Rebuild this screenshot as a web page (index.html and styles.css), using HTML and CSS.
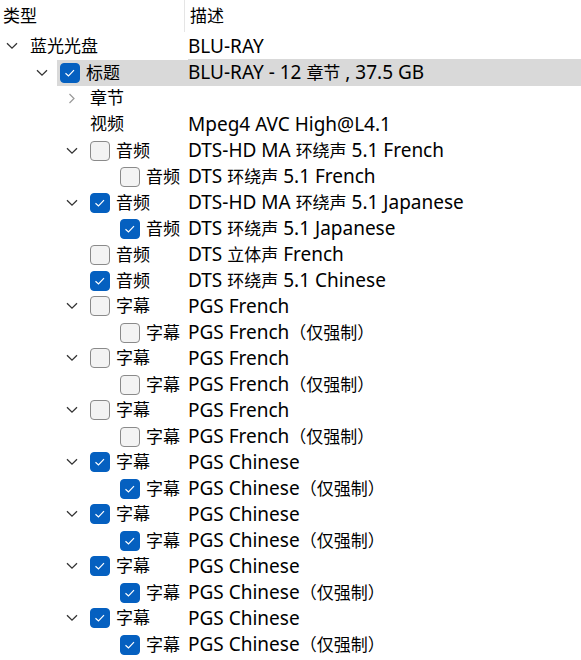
FILE: index.html
```html
<!DOCTYPE html>
<html lang="zh-CN">
<head>
    <meta charset="UTF-8">
    <title>蓝光光盘</title>
    <link rel="stylesheet" href="styles.css">
</head>
<body>
    <div class="tree">
        <div class="header">
            <div class="col-name">类型</div>
            <div class="col-desc">描述</div>
        </div>

        <div class="row lv0">
            <div class="name"><span class="twisty open"></span><span class="item"><span class="label">蓝光光盘</span></span></div>
            <div class="desc">BLU-RAY</div>
        </div>
        <div class="row lv1 selected">
            <div class="name"><span class="twisty open"></span><span class="item"><span class="box on"></span><span class="label">标题</span></span></div>
            <div class="desc">BLU-RAY - 12 <span class="zh">章节</span> , 37.5 GB</div>
        </div>
        <div class="row lv2">
            <div class="name"><span class="twisty closed"></span><span class="item"><span class="label">章节</span></span></div>
            <div class="desc"></div>
        </div>
        <div class="row lv2">
            <div class="name"><span class="twisty"></span><span class="item"><span class="label">视频</span></span></div>
            <div class="desc">Mpeg4 AVC High@L4.1</div>
        </div>
        <div class="row lv2">
            <div class="name"><span class="twisty open"></span><span class="item"><span class="box"></span><span class="label">音频</span></span></div>
            <div class="desc">DTS-HD MA <span class="zh">环绕声</span> 5.1 French</div>
        </div>
        <div class="row lv3">
            <div class="name"><span class="twisty"></span><span class="item"><span class="box"></span><span class="label">音频</span></span></div>
            <div class="desc">DTS <span class="zh">环绕声</span> 5.1 French</div>
        </div>
        <div class="row lv2">
            <div class="name"><span class="twisty open"></span><span class="item"><span class="box on"></span><span class="label">音频</span></span></div>
            <div class="desc">DTS-HD MA <span class="zh">环绕声</span> 5.1 Japanese</div>
        </div>
        <div class="row lv3">
            <div class="name"><span class="twisty"></span><span class="item"><span class="box on"></span><span class="label">音频</span></span></div>
            <div class="desc">DTS <span class="zh">环绕声</span> 5.1 Japanese</div>
        </div>
        <div class="row lv2">
            <div class="name"><span class="twisty"></span><span class="item"><span class="box"></span><span class="label">音频</span></span></div>
            <div class="desc">DTS <span class="zh">立体声</span> French</div>
        </div>
        <div class="row lv2">
            <div class="name"><span class="twisty"></span><span class="item"><span class="box on"></span><span class="label">音频</span></span></div>
            <div class="desc">DTS <span class="zh">环绕声</span> 5.1 Chinese</div>
        </div>

        <div class="row lv2">
            <div class="name"><span class="twisty open"></span><span class="item"><span class="box"></span><span class="label">字幕</span></span></div>
            <div class="desc">PGS French</div>
        </div>
        <div class="row lv3">
            <div class="name"><span class="twisty"></span><span class="item"><span class="box"></span><span class="label">字幕</span></span></div>
            <div class="desc">PGS French<span class="zh">（仅强制）</span></div>
        </div>
        <div class="row lv2">
            <div class="name"><span class="twisty open"></span><span class="item"><span class="box"></span><span class="label">字幕</span></span></div>
            <div class="desc">PGS French</div>
        </div>
        <div class="row lv3">
            <div class="name"><span class="twisty"></span><span class="item"><span class="box"></span><span class="label">字幕</span></span></div>
            <div class="desc">PGS French<span class="zh">（仅强制）</span></div>
        </div>
        <div class="row lv2">
            <div class="name"><span class="twisty open"></span><span class="item"><span class="box"></span><span class="label">字幕</span></span></div>
            <div class="desc">PGS French</div>
        </div>
        <div class="row lv3">
            <div class="name"><span class="twisty"></span><span class="item"><span class="box"></span><span class="label">字幕</span></span></div>
            <div class="desc">PGS French<span class="zh">（仅强制）</span></div>
        </div>
        <div class="row lv2">
            <div class="name"><span class="twisty open"></span><span class="item"><span class="box on"></span><span class="label">字幕</span></span></div>
            <div class="desc">PGS Chinese</div>
        </div>
        <div class="row lv3">
            <div class="name"><span class="twisty"></span><span class="item"><span class="box on"></span><span class="label">字幕</span></span></div>
            <div class="desc">PGS Chinese<span class="zh">（仅强制）</span></div>
        </div>
        <div class="row lv2">
            <div class="name"><span class="twisty open"></span><span class="item"><span class="box on"></span><span class="label">字幕</span></span></div>
            <div class="desc">PGS Chinese</div>
        </div>
        <div class="row lv3">
            <div class="name"><span class="twisty"></span><span class="item"><span class="box on"></span><span class="label">字幕</span></span></div>
            <div class="desc">PGS Chinese<span class="zh">（仅强制）</span></div>
        </div>
        <div class="row lv2">
            <div class="name"><span class="twisty open"></span><span class="item"><span class="box on"></span><span class="label">字幕</span></span></div>
            <div class="desc">PGS Chinese</div>
        </div>
        <div class="row lv3">
            <div class="name"><span class="twisty"></span><span class="item"><span class="box on"></span><span class="label">字幕</span></span></div>
            <div class="desc">PGS Chinese<span class="zh">（仅强制）</span></div>
        </div>
        <div class="row lv2">
            <div class="name"><span class="twisty open"></span><span class="item"><span class="box on"></span><span class="label">字幕</span></span></div>
            <div class="desc">PGS Chinese</div>
        </div>
        <div class="row lv3">
            <div class="name"><span class="twisty"></span><span class="item"><span class="box on"></span><span class="label">字幕</span></span></div>
            <div class="desc">PGS Chinese<span class="zh">（仅强制）</span></div>
        </div>
    </div>
</body>
</html>
```

FILE: styles.css
```css
body {
    margin: 0;
    background-color: #fff;
    color: #000;
    font-family: "Noto Sans", "Noto Sans CJK SC", sans-serif;
    font-size: 17px;
}
.tree {
    width: 581px;
}
.header {
    display: grid;
    grid-template-columns: 184px 1fr;
    height: 33px;
}
.header .col-name {
    padding-left: 3px;
    line-height: 32px;
}
.header .col-desc {
    border-left: 1px solid #e5e5e5;
    height: 32px;
    padding-left: 5px;
    line-height: 32px;
}
.row {
    display: grid;
    grid-template-columns: 188px 1fr;
    height: 26px;
    line-height: 26px;
}
.name {
    display: flex;
    align-items: center;
    white-space: nowrap;
    padding-left: 1px;
}
.lv1 .name { padding-left: 31px; }
.lv2 .name { padding-left: 61px; }
.lv3 .name { padding-left: 91px; }
.twisty {
    flex: none;
    width: 22px;
    height: 26px;
    background-repeat: no-repeat;
    background-position: center;
}
.twisty.open {
    background-image: url("data:image/svg+xml,%3Csvg xmlns='http://www.w3.org/2000/svg' width='12' height='8' viewBox='0 0 12 8'%3E%3Cpath d='M1 1.2 6 6.2 11 1.2' fill='none' stroke='%23333' stroke-width='1.3'/%3E%3C/svg%3E");
}
.twisty.closed {
    background-image: url("data:image/svg+xml,%3Csvg xmlns='http://www.w3.org/2000/svg' width='8' height='11' viewBox='0 0 8 11'%3E%3Cpath d='M1.5 1 6 5.5 1.5 10' fill='none' stroke='%23999' stroke-width='1.2'/%3E%3C/svg%3E");
}
.item {
    flex: 1;
    display: flex;
    align-items: center;
    height: 26px;
    margin-left: 4px;
    padding-left: 3px;
}
.box {
    flex: none;
    box-sizing: border-box;
    width: 20px;
    height: 20px;
    margin-right: 6px;
    border: 1px solid #8a8a8a;
    border-radius: 4px;
    background-color: #f3f3f3;
}
.box.on {
    border-color: #0560c0;
    background-color: #0560c0;
    background-image: url("data:image/svg+xml,%3Csvg xmlns='http://www.w3.org/2000/svg' width='18' height='18' viewBox='0 0 18 18'%3E%3Cpath d='M4.5 9.2 7.5 12 13 6.2' fill='none' stroke='%23fff' stroke-width='1.2'/%3E%3C/svg%3E");
    background-position: center;
    background-repeat: no-repeat;
}
.desc {
    white-space: nowrap;
    font-size: 19px;
}
.desc .zh {
    font-size: 17px;
}
.selected .item,
.selected .desc {
    background-color: #d9d9d9;
}
```
